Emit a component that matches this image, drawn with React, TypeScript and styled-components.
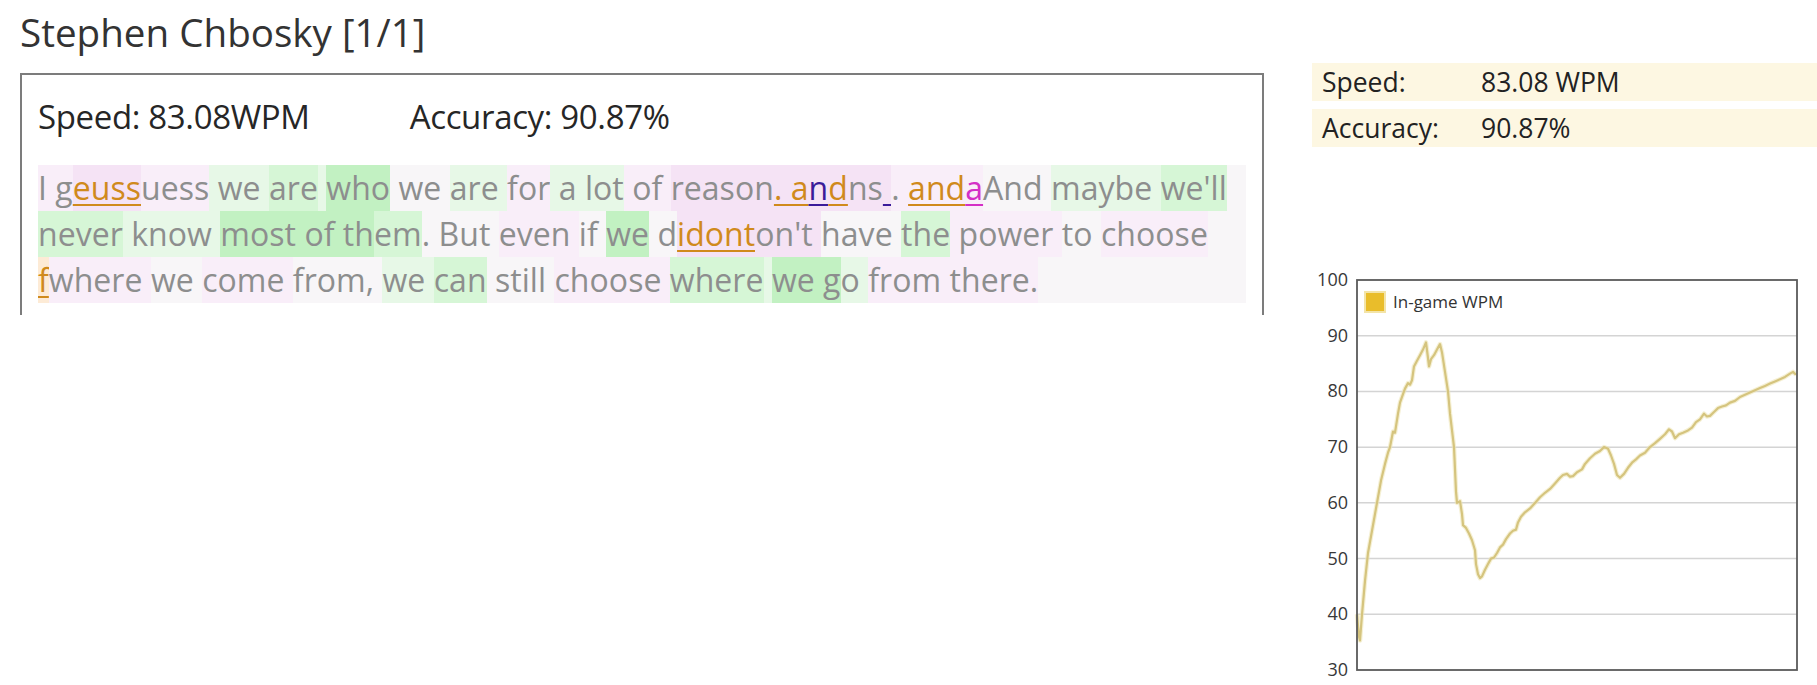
import styled, { createGlobalStyle } from "styled-components";

type Tone = "orange" | "blue" | "magenta";
type Heat = "n" | "p" | "P" | "g" | "G" | "H" | "o";
type Chunk = [string, Heat, Tone?];

const passage: Chunk[][] = [
  [
    ["I g", "p"],
    ["euss", "P", "orange"],
    ["uess", "p"],
    [" we ", "g"],
    ["are", "G"],
    [" ", "g"],
    ["who", "H"],
    [" we ", "n"],
    ["are ", "g"],
    ["for", "p"],
    [" a ", "g"],
    ["lot", "g"],
    [" of ", "p"],
    ["reason", "P"],
    [". a", "P", "orange"],
    ["n", "P", "blue"],
    ["d", "P", "orange"],
    ["ns", "P"],
    [" ", "P", "blue"],
    [". ", "p"],
    ["and", "p", "orange"],
    ["a", "p", "magenta"],
    ["And ", "n"],
    ["maybe ", "g"],
    ["we'll", "G"],
  ],
  [
    ["never", "G"],
    [" know ", "g"],
    ["most of th", "H"],
    ["em", "G"],
    [". But ", "n"],
    ["even ", "p"],
    ["if ", "n"],
    ["we", "H"],
    [" d", "n"],
    ["idont", "P", "orange"],
    ["on't ", "P"],
    ["have ", "n"],
    ["the", "G"],
    [" power ", "p"],
    ["to ", "n"],
    ["choose", "p"],
  ],
  [
    ["f", "o", "orange"],
    ["where ", "p"],
    ["we ", "n"],
    ["come ", "p"],
    ["from, ", "n"],
    ["we ", "g"],
    ["can", "G"],
    [" still ", "n"],
    ["choose ", "p"],
    ["where", "G"],
    [" ", "g"],
    ["we g", "H"],
    ["o ", "g"],
    ["from there.", "p"],
  ],
];

const wpmSamples: [number, number][] = [
  [1357, 40], [1359, 36], [1360, 35.3], [1362, 40], [1365, 46], [1368, 51],
  [1372, 55], [1375, 58], [1378, 61], [1381, 64], [1385, 67], [1388, 69],
  [1390, 70], [1393, 72.8], [1395, 72.6], [1398, 76], [1400, 78], [1403, 79.5],
  [1405, 80.5], [1408, 81.5], [1410, 81.2], [1412, 82], [1414, 84.5], [1417, 85.5],
  [1420, 86.5], [1423, 87.5], [1426, 88.8], [1428, 86], [1429, 84.5], [1431, 85.8],
  [1434, 86.5], [1437, 87.5], [1440, 88.5], [1442, 87], [1445, 83.5], [1448, 80],
  [1450, 76], [1452, 73], [1454, 70], [1455, 66], [1456, 62], [1457, 60],
  [1460, 60.3], [1462, 58], [1463, 56], [1466, 55.5], [1469, 54.5], [1472, 53.3],
  [1475, 51.5], [1476, 49], [1478, 47.2], [1480, 46.5], [1482, 46.8], [1485, 48],
  [1488, 49], [1491, 50], [1494, 50.2], [1497, 51], [1500, 52], [1503, 52.5],
  [1506, 53.5], [1510, 54.5], [1513, 55], [1516, 55.2], [1518, 56.5], [1521, 57.5],
  [1525, 58.3], [1530, 59], [1535, 60], [1540, 61], [1545, 61.8], [1550, 62.5],
  [1555, 63.5], [1560, 64.5], [1563, 65], [1567, 65.2], [1570, 64.7], [1573, 64.8],
  [1577, 65.5], [1582, 66], [1585, 67], [1590, 68], [1595, 68.8], [1600, 69.3],
  [1604, 70], [1608, 69.7], [1611, 68.5], [1614, 67], [1617, 65], [1620, 64.5],
  [1624, 65.2], [1628, 66.3], [1632, 67.2], [1636, 67.8], [1640, 68.5], [1645, 69],
  [1650, 70], [1655, 70.7], [1660, 71.5], [1665, 72.3], [1669, 73.2], [1672, 72.8],
  [1675, 71.6], [1679, 72.3], [1683, 72.6], [1688, 73], [1692, 73.5], [1696, 74.5],
  [1700, 75], [1704, 76], [1707, 75.5], [1710, 75.6], [1714, 76.3], [1718, 77],
  [1722, 77.3], [1726, 77.5], [1730, 78], [1735, 78.3], [1740, 79], [1745, 79.4],
  [1750, 79.8], [1755, 80.2], [1760, 80.6], [1765, 81], [1770, 81.4], [1775, 81.8],
  [1780, 82.2], [1785, 82.6], [1790, 83.2], [1793, 83.5], [1796, 83],
];

const CHART_W = 505;
const CHART_H = 420;
const PLOT_LEFT = 45;
const PLOT_RIGHT = 485;
const PLOT_TOP = 15;
const PLOT_BOTTOM = 405;
const yFor = (v: number) => PLOT_TOP + ((100 - v) * (PLOT_BOTTOM - PLOT_TOP)) / 70;

const WpmChart = () => {
  const ticks = [100, 90, 80, 70, 60, 50, 40, 30];
  const points = wpmSamples
    .map(([x, v]) => `${(x - 1312).toFixed(1)},${yFor(v).toFixed(1)}`)
    .join(" ");

  return (
    <svg width={CHART_W} height={CHART_H} viewBox={`0 0 ${CHART_W} ${CHART_H}`}>
      {ticks.slice(1, -1).map((t) => (
        <line
          key={t}
          x1={PLOT_LEFT}
          x2={PLOT_RIGHT}
          y1={yFor(t)}
          y2={yFor(t)}
          stroke="#d4d4d4"
          strokeWidth={1.5}
        />
      ))}
      {ticks.map((t) => (
        <text
          key={t}
          x={36}
          y={yFor(t) + 6}
          textAnchor="end"
          fontSize={18}
          fill="#383838"
          fontFamily="'Open Sans', sans-serif"
        >
          {t}
        </text>
      ))}
      <polyline
        points={points}
        fill="none"
        stroke="#efe6b8"
        strokeWidth={4.5}
        strokeLinejoin="round"
        opacity={0.6}
      />
      <polyline
        points={points}
        fill="none"
        stroke="#d5c47e"
        strokeWidth={2.2}
        strokeLinejoin="round"
      />
      <rect
        x={PLOT_LEFT}
        y={PLOT_TOP}
        width={PLOT_RIGHT - PLOT_LEFT}
        height={PLOT_BOTTOM - PLOT_TOP}
        fill="none"
        stroke="#5a5a5a"
        strokeWidth={1.8}
      />
      <rect x={53} y={27} width={20} height={20} fill="#e9bd2b" stroke="#f3e4a8" strokeWidth={2} />
      <text x={81} y={43} fontSize={17} fill="#333" fontFamily="'Open Sans', sans-serif">
        In-game WPM
      </text>
    </svg>
  );
};

export default function App() {
  return (
    <>
      <GlobalStyle />
      <Page>
        <LeftColumn>
          <Title>Stephen Chbosky [1/1]</Title>
          <ResultBox>
            <BoxStats>
              <BoxStat>Speed: 83.08WPM</BoxStat>
              <BoxStat>Accuracy: 90.87%</BoxStat>
            </BoxStats>
            <Passage>
              {passage.map((line, i) => (
                <PassageLine key={i}>
                  {line.map(([text, heat, tone], j) =>
                    tone ? (
                      <Mistake key={j} $heat={heat} $tone={tone}>
                        {text}
                      </Mistake>
                    ) : (
                      <Typed key={j} $heat={heat}>
                        {text}
                      </Typed>
                    )
                  )}
                </PassageLine>
              ))}
            </Passage>
          </ResultBox>
        </LeftColumn>

        <RightColumn>
          <StatsTable>
            <StatsRow>
              <StatsLabel>Speed:</StatsLabel>
              <StatsValue>83.08 WPM</StatsValue>
            </StatsRow>
            <StatsRow>
              <StatsLabel>Accuracy:</StatsLabel>
              <StatsValue>90.87%</StatsValue>
            </StatsRow>
          </StatsTable>
          <ChartWrap>
            <WpmChart />
          </ChartWrap>
        </RightColumn>
      </Page>
    </>
  );
}

// --------styled components---------
const GlobalStyle = createGlobalStyle`
  html, body {
    margin: 0;
    padding: 0;
    background: #fff;
  }
  body {
    font-family: "Open Sans", "Noto Sans", sans-serif;
    color: #333;
    overflow: hidden;
  }
`;

const heatColors: Record<Heat, string> = {
  n: "transparent",
  p: "#f9eef9",
  P: "#f5e3f5",
  g: "#e7f8e7",
  G: "#d6f6d6",
  H: "#c2f1c2",
  o: "#fdebd6",
};

const toneColors: Record<Tone, string> = {
  orange: "#d08a1c",
  blue: "#3a1c9a",
  magenta: "#d42fc6",
};

const Page = styled.div`
  display: flex;
  align-items: flex-start;
  padding-left: 20px;
  width: 1817px;
  height: 685px;
  box-sizing: border-box;
`;

const LeftColumn = styled.div`
  width: 1244px;
  flex-shrink: 0;
`;

const Title = styled.h1`
  margin: 0;
  padding-top: 7px;
  height: 73px;
  box-sizing: border-box;
  font-size: 38.6px;
  font-weight: 400;
  line-height: 50px;
  color: #333;
`;

const ResultBox = styled.div`
  height: 242px;
  box-sizing: border-box;
  border: 2px solid #7c7c7c;
  border-bottom: none;
  padding: 0 16px;
`;

const BoxStats = styled.div`
  display: flex;
  gap: 100px;
  height: 90px;
  align-items: center;
  padding-bottom: 8px;
  box-sizing: border-box;
`;

const BoxStat = styled.div`
  font-size: 33px;
  color: #262626;
  letter-spacing: -0.35px;
`;

const Passage = styled.div`
  background: #f8f6f8;
  font-size: 32px;
  line-height: 46px;
  color: #8d8e8e;
  letter-spacing: 0.05px;
`;

const PassageLine = styled.div`
  white-space: pre;
  height: 46px;
`;

const Typed = styled.span<{ $heat: Heat }>`
  display: inline-block;
  vertical-align: top;
  height: 46px;
  background: ${({ $heat }) => heatColors[$heat]};
`;

const Mistake = styled(Typed)<{ $tone: Tone }>`
  color: ${({ $tone }) => toneColors[$tone]};
  text-decoration: underline;
  text-decoration-thickness: 2px;
  text-underline-offset: 4px;
`;

const RightColumn = styled.div`
  margin-left: 48px;
  flex: 1;
  display: flex;
  flex-direction: column;
  padding-top: 63px;
`;

const StatsTable = styled.div`
  display: flex;
  flex-direction: column;
  gap: 8px;
`;

const StatsRow = styled.div`
  display: grid;
  grid-template-columns: 159px 1fr;
  align-items: center;
  height: 38px;
  padding-left: 10px;
  background: #fdf7e2;
  font-size: 26.5px;
  color: #222;
`;

const StatsLabel = styled.div``;

const StatsValue = styled.div``;

const ChartWrap = styled.div`
  margin-top: 118px;
  width: 505px;
  svg {
    display: block;
  }
`;
